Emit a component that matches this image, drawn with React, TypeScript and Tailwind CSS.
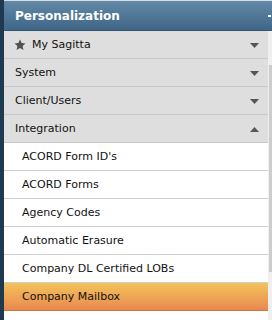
import { ReactNode } from "react";

const sections = [
  { label: "System", open: false },
  { label: "Client/Users", open: false },
  { label: "Integration", open: true },
];

const items = [
  "ACORD Form ID's",
  "ACORD Forms",
  "Agency Codes",
  "Automatic Erasure",
  "Company DL Certified LOBs",
];

function Caret({ up = false }: { up?: boolean }) {
  return (
    <svg width="9" height="5" viewBox="0 0 9 5" className="mr-[9px] shrink-0">
      {up ? <path d="M0 5 L4.5 0 L9 5 Z" fill="#555" /> : <path d="M0 0 L9 0 L4.5 5 Z" fill="#555" />}
    </svg>
  );
}

function Row({ children, caret, up }: { children: ReactNode; caret?: boolean; up?: boolean }) {
  return (
    <div className="flex h-[28px] shrink-0 items-center justify-between border-b border-[#c9c9c9] bg-[#dedede] pl-[11px] pt-[1px] text-[#111]">
      <div className="flex items-center">{children}</div>
      {caret && <Caret up={up} />}
    </div>
  );
}

export default function App() {
  return (
    <div className="flex h-[320px] w-[272px] bg-white font-['DejaVu_Sans',sans-serif] text-[11px]">
      <div className="w-[4px] shrink-0 bg-[#1e3a50]" />
      <div className="flex min-w-0 flex-1 flex-col">
        <div className="flex h-[31px] shrink-0 items-center justify-between border-t border-b border-t-[#d9dde0] border-b-[#34566f] bg-gradient-to-b from-[#6289a8] to-[#3f6686] pl-[11px]">
          <span className="text-[12px] font-bold text-white">Personalization</span>
          <span className="mr-[1px] h-[2px] w-[3px] bg-white" />
        </div>
        <div className="flex flex-1">
          <div className="flex min-w-0 flex-1 flex-col">
            <Row caret>
              <svg width="12" height="12" viewBox="0 0 24 24" className="-ml-[1px] mr-[6px] -mt-[1px]">
                <path
                  d="M12 1l3.3 7.2 7.7.8-5.8 5.2 1.7 7.7L12 18l-6.9 3.9 1.7-7.7L1 9l7.7-.8z"
                  fill="#505050"
                />
              </svg>
              <span>My Sagitta</span>
            </Row>
            {sections.map((s) => (
              <Row key={s.label} caret up={s.open}>
                <span>{s.label}</span>
              </Row>
            ))}
            {items.map((label) => (
              <div
                key={label}
                className="flex h-[28px] shrink-0 items-center border-b border-[#cfcfcf] bg-white pl-[18px] pt-[1px] text-[#111]"
              >
                {label}
              </div>
            ))}
            <div className="flex h-[28px] shrink-0 items-center border-b border-[#c9763f] bg-gradient-to-b from-[#f2c35a] to-[#e8884f] pl-[18px] pt-[1px] text-[#111]">
              Company Mailbox
            </div>
          </div>
          <div className="flex w-[4px] shrink-0 flex-col bg-[#efefef]">
            <div className="h-[34px]" />
            <div className="ml-[1px] h-[207px] w-[3px] bg-[#cdcdcd]" />
          </div>
        </div>
      </div>
    </div>
  );
}
